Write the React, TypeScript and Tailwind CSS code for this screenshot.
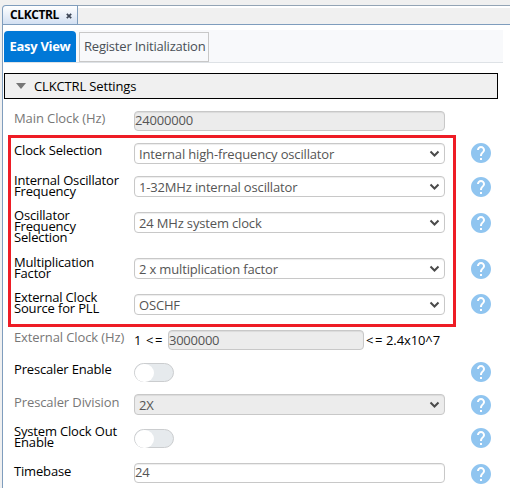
import React from "react";

type Row = {
  label: string[];
  muted?: boolean;
  height: string;
  labelPad: string;
  kind: "input" | "select" | "range" | "toggle";
  value?: string;
  disabled?: boolean;
  helpPad?: string;
};

const rows: Row[] = [
  { label: ["Main Clock (Hz)"], muted: true, height: "h-[32px]", labelPad: "pt-[5px]", kind: "input", value: "24000000", disabled: true },
  { label: ["Clock Selection"], height: "h-[33px]", labelPad: "pt-[5px]", kind: "select", value: "Internal high-frequency oscillator", helpPad: "pt-[3px]" },
  { label: ["Internal Oscillator", "Frequency"], height: "h-[36px]", labelPad: "pt-[2px]", kind: "select", value: "1-32MHz internal oscillator", helpPad: "pt-[4px]" },
  { label: ["Oscillator", "Frequency", "Selection"], height: "h-[46px]", labelPad: "pt-[1px]", kind: "select", value: "24 MHz system clock", helpPad: "pt-[4px]" },
  { label: ["Multiplication", "Factor"], height: "h-[36px]", labelPad: "pt-[2px]", kind: "select", value: "2 x multiplication factor", helpPad: "pt-[4px]" },
  { label: ["External Clock", "Source for PLL"], height: "h-[36px]", labelPad: "pt-[1px]", kind: "select", value: "OSCHF", helpPad: "pt-[3px]" },
  { label: ["External Clock (Hz)"], muted: true, height: "h-[33px]", labelPad: "pt-[5px]", kind: "range", value: "3000000", disabled: true },
  { label: ["Prescaler Enable"], height: "h-[31px]", labelPad: "pt-[4px]", kind: "toggle", helpPad: "pt-[2px]" },
  { label: ["Prescaler Division"], muted: true, height: "h-[35px]", labelPad: "pt-[6px]", kind: "select", value: "2X", disabled: true, helpPad: "pt-[4px]" },
  { label: ["System Clock Out", "Enable"], height: "h-[34px]", labelPad: "pt-0", kind: "toggle", helpPad: "pt-[2px]" },
  { label: ["Timebase"], height: "h-[25px]", labelPad: "pt-[6px]", kind: "input", value: "24", helpPad: "pt-[4px]" },
];

function Help() {
  return (
    <svg width="20" height="20" viewBox="2 2 20 20" className="block">
      <path
        fill="#90c5f0"
        d="M12 2C6.48 2 2 6.48 2 12s4.48 10 10 10 10-4.48 10-10S17.52 2 12 2zm1 17h-2v-2h2v2zm2.07-7.75l-.9.92C13.45 12.9 13 13.5 13 15h-2v-.5c0-1.1.45-2.1 1.17-2.83l1.24-1.26c.37-.36.59-.86.59-1.41 0-1.1-.9-2-2-2s-2 .9-2 2H8c0-2.21 1.79-4 4-4s4 1.79 4 4c0 .88-.36 1.68-.93 2.25z"
      />
    </svg>
  );
}

function Control({ row }: { row: Row }) {
  if (row.kind === "toggle") {
    return (
      <div className="flex h-[19px] w-[40px] items-center rounded-full border border-[#cbcdcf] bg-[#e6eaed]">
        <div className="h-[18px] w-[19px] shrink-0 rounded-full bg-white" />
      </div>
    );
  }
  if (row.kind === "select") {
    return (
      <div
        className={`flex h-[21px] w-[311px] items-center justify-between rounded-[4px] border border-[#c8c8c8] pl-1 pr-[4px] text-[#555] shadow-[inset_0_1px_1px_rgba(0,0,0,0.075)] ${row.disabled ? "bg-[#ececec]" : "bg-white"}`}
      >
        <span className="whitespace-pre text-[13px] leading-[18px] tracking-[-0.16px]">{row.value}</span>
        <svg width="11" height="8" viewBox="0 0 11 8" className="block">
          <path d="M1.5 1.5 L5.5 5.5 L9.5 1.5" fill="none" stroke="#4a4a4a" strokeWidth="2" />
        </svg>
      </div>
    );
  }
  const box = `flex h-[20px] items-center rounded-[4px] border border-[#c8c8c8] text-[#555] shadow-[inset_0_1px_1px_rgba(0,0,0,0.075)] ${row.disabled ? "bg-[#ececec]" : "bg-white"}`;
  if (row.kind === "range") {
    return (
      <div className="flex text-[13px] leading-[20px]">
        <span className="w-[12px]">1</span>
        <span className="w-[22px] tracking-[1.5px]">&lt;=</span>
        <div className={`${box} w-[196px]`}>
          <span className="text-[13px] tracking-[-0.25px]">{row.value}</span>
        </div>
        <span className="ml-[2px] w-[20px] tracking-[1.5px]">&lt;=</span>
        <span className="tracking-[-0.1px]">2.4x10^7</span>
      </div>
    );
  }
  return (
    <div className={`${box} w-[311px]`}>
      <span className="text-[13px] tracking-[-0.2px]">{row.value}</span>
    </div>
  );
}

export default function App() {
  return (
    <div className="relative h-[488px] w-[510px] overflow-hidden bg-[#f0f0f0] pl-[2px] font-['Open_Sans',sans-serif] text-black">
      <div className="mt-[5px] flex h-[20px] border-b border-[#7f9dbd]">
        <div className="flex h-[19px] w-[76px] items-center rounded-tl-[4px] border-l border-r border-t border-[#7f9dbd] bg-linear-to-b from-white to-[#d3e0f2] pl-[7px]">
          <span className="text-[12px] font-bold leading-[18px] tracking-[-0.4px]">CLKCTRL</span>
          <svg width="6" height="6" viewBox="0 0 6 6" className="ml-[7px] mt-px">
            <path d="M.8 .8 L5.2 5.2 M5.2 .8 L.8 5.2" stroke="#3c4656" strokeWidth="1.7" />
          </svg>
        </div>
        <div className="h-[3px] grow border-b-2 border-t border-b-white border-t-[#93a4b5]" />
      </div>
      <div className="h-[463px] border-l border-[#7f9dbd] bg-white pt-[5px]">
        <div className="ml-px flex h-[33px] w-[499px] items-start border-b border-[#dee2e6] bg-[#f8f9fb]">
          <div className="mt-px flex h-[31px] w-[72px] items-center justify-center rounded-t-[4px] bg-[#0078d7] text-[13px] font-bold tracking-[-0.3px] text-white">
            <span>Easy View</span>
          </div>
          <div className="ml-[3px] mt-[2px] flex h-[30px] w-[130px] items-center border border-[#c8c8c8] pl-[4px] text-[13px] tracking-[-0.2px] text-[#495057]">
            <span>Register Initialization</span>
          </div>
        </div>
        <div className="ml-px mt-[10px] flex h-[26px] w-[494px] items-center border border-black bg-[#f0f0f0]">
          <svg width="10" height="6" viewBox="0 0 10 6" className="ml-[11px]">
            <path d="M0 0H10L5 6Z" fill="#777" />
          </svg>
          <span className="ml-[8px] pt-[2px] text-[13px] tracking-[-0.15px]">CLKCTRL Settings</span>
        </div>
        <div className="mt-[9px]">
          {rows.map((row) => (
            <div key={row.label[0]} className={`flex items-start pl-[11px] ${row.height}`}>
              <div
                className={`w-[120px] shrink-0 text-[13px] leading-[11px] ${row.labelPad} ${row.muted ? "tracking-[-0.1px] text-[#777]" : "tracking-[-0.17px] text-black"}`}
              >
                {row.label.map((line) => (
                  <div key={line} className="whitespace-nowrap">{line}</div>
                ))}
              </div>
              <div className="w-[337px] shrink-0 pt-[3px]">
                <Control row={row} />
              </div>
              {row.helpPad && (
                <div className={row.helpPad}>
                  <Help />
                </div>
              )}
            </div>
          ))}
        </div>
      </div>
      <div className="absolute left-[8px] top-[135px] h-[192px] w-[448px] border-[3px] border-[#ee1c25]" />
    </div>
  );
}
